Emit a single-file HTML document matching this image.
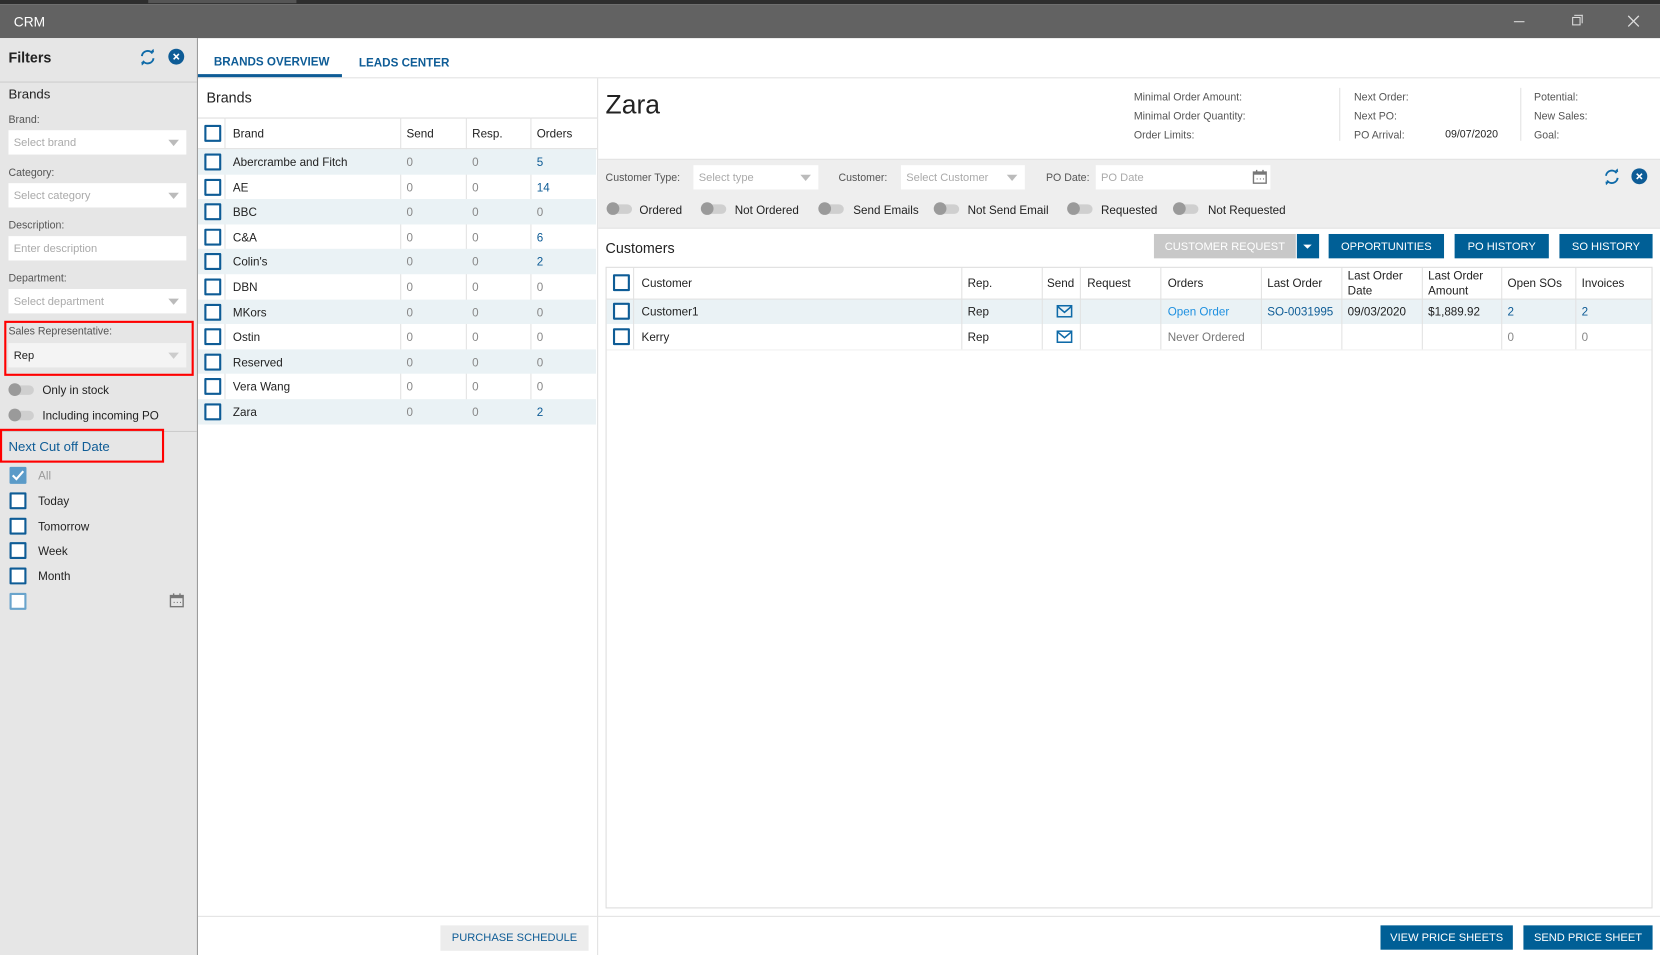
<!DOCTYPE html>
<html><head><meta charset="utf-8">
<style>
*{box-sizing:border-box;margin:0;padding:0}
html,body{width:1660px;height:955px;overflow:hidden;background:#fff}
#w{position:absolute;left:0;top:0;width:1568px;height:902px;transform:scale(1.05867,1.05876);transform-origin:0 0;font-family:"Liberation Sans",sans-serif;font-size:11px;color:#222}
.a{position:absolute}
.t{position:absolute;white-space:nowrap;line-height:14px;margin-top:1px}
.lbl{color:#555;font-size:10px}
.inp{position:absolute;background:#fff;height:23px}
.ph{position:absolute;left:5px;top:6px;color:#aaa;font-size:10.5px;white-space:nowrap}
.arr{position:absolute;right:7px;top:9px;width:0;height:0;border-left:5px solid transparent;border-right:5px solid transparent;border-top:6px solid #bbb}
.cb{position:absolute;width:16px;height:16px;border:2px solid #0e5c96;border-radius:1px;background:#fff}
.tg{position:absolute;width:23px;height:9px;border-radius:5px;background:#cfcfcf}
.tg:before{content:"";position:absolute;left:-1px;top:-2px;width:12px;height:12px;border-radius:50%;background:#9a9a9a}
.btn{position:absolute;background:#005f96;color:#fff;font-size:10.5px;text-align:center;line-height:24px;height:23px}
.blue{color:#0e5c96}
.vl{position:absolute;width:1px;background:#e2e2e2}
.hl{position:absolute;height:1px;background:#e2e2e2}
</style></head><body><div id="w">
<div class="a" style="left:0;top:0;width:1568px;height:4px;background:#2e2e2e"></div>
<div class="a" style="left:140px;top:0;width:140px;height:3px;background:#555"></div>
<div class="a" style="left:0;top:4px;width:1568px;height:32px;background:#626262"></div>
<div class="t" style="left:13px;top:13px;color:#fff;font-size:13px">CRM</div>
<div class="a" style="left:1430px;top:20px;width:10px;height:1px;background:#ddd"></div>
<div class="a" style="left:1485px;top:16px;width:8px;height:8px;border:1px solid #ddd"></div>
<div class="a" style="left:1487px;top:14px;width:8px;height:8px;border-top:1px solid #ddd;border-right:1px solid #ddd"></div>
<svg class="a" style="left:1537px;top:14px" width="12" height="12"><path d="M1 1L11 11M11 1L1 11" stroke="#ddd" stroke-width="1.2"/></svg>

<div class="a" style="left:0;top:36px;width:187px;height:866px;background:#e6e6e6;border-right:1px solid #9a9a9a"></div>
<div class="t" style="left:8px;top:47px;font-size:13.5px;font-weight:bold">Filters</div>
<svg class="a" style="left:131px;top:46px" width="17" height="16" viewBox="0 0 17 16"><path d="M3 7A5.5 5.5 0 0 1 13 4.5M14 9A5.5 5.5 0 0 1 4 11.5" fill="none" stroke="#0e6aa8" stroke-width="1.8"/><path d="M11 3l3.5 0.5L14 0z M6 13l-3.5-0.5L3 16z" fill="#0e6aa8"/></svg>
<div class="a" style="left:159px;top:46px;width:15px;height:15px;border-radius:50%;background:#0e5c96"></div>
<svg class="a" style="left:163px;top:50px" width="7" height="7"><path d="M1 1L6 6M6 1L1 6" stroke="#fff" stroke-width="1.5"/></svg>
<div class="a" style="left:0;top:77px;width:186px;height:1px;background:#ccc"></div>
<div class="t" style="left:8px;top:81px;font-size:12.5px">Brands</div>
<div class="t lbl" style="left:8px;top:106px">Brand:</div>
<div class="inp" style="left:8px;top:123px;width:168px"><span class="ph">Select brand</span><span class="arr"></span></div>
<div class="t lbl" style="left:8px;top:156px">Category:</div>
<div class="inp" style="left:8px;top:173px;width:168px"><span class="ph">Select category</span><span class="arr"></span></div>
<div class="t lbl" style="left:8px;top:206px">Description:</div>
<div class="inp" style="left:8px;top:223px;width:168px"><span class="ph">Enter description</span></div>
<div class="t lbl" style="left:8px;top:256px">Department:</div>
<div class="inp" style="left:8px;top:273px;width:168px"><span class="ph">Select department</span><span class="arr"></span></div>
<div class="a" style="left:4px;top:303px;width:179px;height:52px;border:2px solid #f00"></div>
<div class="t lbl" style="left:8px;top:306px">Sales Representative:</div>
<div class="inp" style="left:8px;top:324px;width:168px;background:#f4f4f4"><span class="ph" style="color:#222">Rep</span><span class="arr" style="border-top-color:#ccc"></span></div>
<div class="tg" style="left:9px;top:364px"></div><div class="t" style="left:40px;top:361px">Only in stock</div>
<div class="tg" style="left:9px;top:388px"></div><div class="t" style="left:40px;top:385px">Including incoming PO</div>
<div class="a" style="left:0;top:407px;width:186px;height:1px;background:#ccc"></div>
<div class="a" style="left:0;top:405px;width:155px;height:32px;border:2px solid #f00"></div>
<div class="t blue" style="left:8px;top:414px;font-size:12.5px">Next Cut off Date</div>
<div class="cb" style="left:9px;top:441px;background:#5b9bc8;border-color:#5b9bc8"></div>
<svg class="a" style="left:11px;top:444px" width="12" height="10"><path d="M1 5l3.5 3.5L11 1" fill="none" stroke="#fff" stroke-width="2"/></svg>
<div class="t" style="left:36px;top:442px;color:#999">All</div>
<div class="cb" style="left:9px;top:465px"></div><div class="t" style="left:36px;top:466px">Today</div>
<div class="cb" style="left:9px;top:489px"></div><div class="t" style="left:36px;top:490px">Tomorrow</div>
<div class="cb" style="left:9px;top:512px"></div><div class="t" style="left:36px;top:513px">Week</div>
<div class="cb" style="left:9px;top:536px"></div><div class="t" style="left:36px;top:537px">Month</div>
<div class="cb" style="left:9px;top:560px;border-color:#6aa4cc"></div>
<svg class="a" style="left:160px;top:560px" width="14" height="14"><rect x="1" y="2.5" width="12" height="10.5" fill="none" stroke="#777" stroke-width="1.3"/><rect x="1" y="2.5" width="12" height="2.5" fill="#777"/><path d="M4 0.5v3M10 0.5v3" stroke="#777" stroke-width="1.3"/><path d="M4 9h1M7 9h1M10 9h1" stroke="#777"/></svg>

<div class="t" style="left:202px;top:51px;font-weight:bold;color:#0e5c96;font-size:11px">BRANDS OVERVIEW</div>
<div class="t" style="left:339px;top:52px;font-weight:bold;color:#0e5c96;font-size:11px">LEADS CENTER</div>
<div class="a" style="left:187px;top:70px;width:136px;height:3px;background:#0e5c96"></div>
<div class="hl" style="left:187px;top:73px;width:1381px"></div>

<div class="vl" style="left:564px;top:74px;height:828px"></div>
<div class="t" style="left:195px;top:85px;font-size:13.5px">Brands</div>
<div class="hl" style="left:187px;top:111px;width:377px;background:#ddd"></div>
<div class="hl" style="left:187px;top:140px;width:377px;background:#ddd"></div>
<div class="vl" style="left:212px;top:111px;height:289px"></div>
<div class="vl" style="left:378px;top:111px;height:289px"></div>
<div class="vl" style="left:440px;top:111px;height:289px"></div>
<div class="vl" style="left:501px;top:111px;height:289px"></div>
<div class="cb" style="left:193px;top:118px"></div>
<div class="t" style="left:220px;top:119px">Brand</div><div class="t" style="left:384px;top:119px">Send</div><div class="t" style="left:446px;top:119px">Resp.</div><div class="t" style="left:507px;top:119px">Orders</div>
<div id="brows"></div>
<div class="hl" style="left:187px;top:865px;width:1381px"></div>
<div class="a" style="left:416px;top:874px;width:140px;height:24px;background:#ececec;color:#0e5c96;font-size:10.5px;text-align:center;line-height:25px">PURCHASE SCHEDULE</div>

<div class="t" style="left:572px;top:84px;font-size:25px;line-height:28px">Zara</div>
<div class="t lbl" style="left:1071px;top:85px">Minimal Order Amount:</div>
<div class="t lbl" style="left:1071px;top:103px">Minimal Order Quantity:</div>
<div class="t lbl" style="left:1071px;top:121px">Order Limits:</div>
<div class="vl" style="left:1265px;top:83px;height:50px"></div>
<div class="t lbl" style="left:1279px;top:85px">Next Order:</div>
<div class="t lbl" style="left:1279px;top:103px">Next PO:</div>
<div class="t lbl" style="left:1279px;top:121px">PO Arrival:</div>
<div class="t" style="left:1365px;top:120px;font-size:10px">09/07/2020</div>
<div class="vl" style="left:1436px;top:83px;height:50px"></div>
<div class="t lbl" style="left:1449px;top:85px">Potential:</div>
<div class="t lbl" style="left:1449px;top:103px">New Sales:</div>
<div class="t lbl" style="left:1449px;top:121px">Goal:</div>

<div class="a" style="left:565px;top:150px;width:1003px;height:66px;background:#eeeeee;border-top:1px solid #e2e2e2;border-bottom:1px solid #e2e2e2"></div>
<div class="t lbl" style="left:572px;top:161px">Customer Type:</div>
<div class="inp" style="left:655px;top:156px;width:118px"><span class="ph">Select type</span><span class="arr"></span></div>
<div class="t lbl" style="left:792px;top:161px">Customer:</div>
<div class="inp" style="left:851px;top:156px;width:117px"><span class="ph">Select Customer</span><span class="arr"></span></div>
<div class="t lbl" style="left:988px;top:161px">PO Date:</div>
<div class="inp" style="left:1035px;top:156px;width:165px"><span class="ph">PO Date</span>
<svg class="a" style="left:148px;top:4px" width="14" height="14"><rect x="1" y="2.5" width="12" height="10.5" fill="none" stroke="#777" stroke-width="1.3"/><rect x="1" y="2.5" width="12" height="2.5" fill="#777"/><path d="M4 0.5v3M10 0.5v3" stroke="#777" stroke-width="1.3"/><path d="M4 9h1M7 9h1M10 9h1" stroke="#777"/></svg></div>
<svg class="a" style="left:1514px;top:159px" width="17" height="16" viewBox="0 0 17 16"><path d="M3 7A5.5 5.5 0 0 1 13 4.5M14 9A5.5 5.5 0 0 1 4 11.5" fill="none" stroke="#0e6aa8" stroke-width="1.8"/><path d="M11 3l3.5 0.5L14 0z M6 13l-3.5-0.5L3 16z" fill="#0e6aa8"/></svg>
<div class="a" style="left:1541px;top:159px;width:15px;height:15px;border-radius:50%;background:#0e5c96"></div>
<svg class="a" style="left:1545px;top:163px" width="7" height="7"><path d="M1 1L6 6M6 1L1 6" stroke="#fff" stroke-width="1.5"/></svg>
<div class="tg" style="left:574px;top:193px"></div><div class="t" style="left:604px;top:191px">Ordered</div>
<div class="tg" style="left:663px;top:193px"></div><div class="t" style="left:694px;top:191px">Not Ordered</div>
<div class="tg" style="left:774px;top:193px"></div><div class="t" style="left:806px;top:191px">Send Emails</div>
<div class="tg" style="left:883px;top:193px"></div><div class="t" style="left:914px;top:191px">Not Send Email</div>
<div class="tg" style="left:1009px;top:193px"></div><div class="t" style="left:1040px;top:191px">Requested</div>
<div class="tg" style="left:1109px;top:193px"></div><div class="t" style="left:1141px;top:191px">Not Requested</div>

<div class="t" style="left:572px;top:227px;font-size:13.5px">Customers</div>
<div class="btn" style="left:1090px;top:221px;width:134px;background:#c8c8c8">CUSTOMER REQUEST</div>
<div class="btn" style="left:1225px;top:221px;width:21px"><span style="position:absolute;left:6px;top:10px;border-left:4px solid transparent;border-right:4px solid transparent;border-top:4px solid #fff"></span></div>
<div class="btn" style="left:1255px;top:221px;width:109px">OPPORTUNITIES</div>
<div class="btn" style="left:1374px;top:221px;width:89px">PO HISTORY</div>
<div class="btn" style="left:1473px;top:221px;width:88px">SO HISTORY</div>

<div class="a" style="left:572px;top:252px;width:989px;height:606px;border:1px solid #ddd"></div>
<div class="a" style="left:573px;top:282px;width:987px;height:24px;background:#eaf2f5"></div>
<div class="hl" style="left:573px;top:282px;width:987px"></div>
<div id="cvl"></div>
<div class="cb" style="left:579px;top:259px"></div>
<div class="t" style="left:606px;top:260px">Customer</div>
<div class="t" style="left:914px;top:260px">Rep.</div>
<div class="t" style="left:989px;top:260px">Send</div>
<div class="t" style="left:1027px;top:260px">Request</div>
<div class="t" style="left:1103px;top:260px">Orders</div>
<div class="t" style="left:1197px;top:260px">Last Order</div>
<div class="t" style="left:1273px;top:253px;line-height:14px">Last Order<br>Date</div>
<div class="t" style="left:1349px;top:253px;line-height:14px">Last Order<br>Amount</div>
<div class="t" style="left:1424px;top:260px">Open SOs</div>
<div class="t" style="left:1494px;top:260px">Invoices</div>

<div class="cb" style="left:579px;top:286px"></div>
<div class="t" style="left:606px;top:287px">Customer1</div>
<div class="t" style="left:914px;top:287px">Rep</div>
<svg class="a" style="left:998px;top:288px" width="15" height="12"><rect x="0.75" y="0.75" width="13.5" height="10.5" fill="none" stroke="#0e6aa8" stroke-width="1.5"/><path d="M1 1.5L7.5 7L14 1.5" fill="none" stroke="#0e6aa8" stroke-width="1.5"/></svg>
<div class="t" style="left:1103px;top:287px;color:#1e90e0">Open Order</div>
<div class="t blue" style="left:1197px;top:287px">SO-0031995</div>
<div class="t" style="left:1273px;top:287px">09/03/2020</div>
<div class="t" style="left:1349px;top:287px">$1,889.92</div>
<div class="t blue" style="left:1424px;top:287px">2</div>
<div class="t blue" style="left:1494px;top:287px">2</div>

<div class="cb" style="left:579px;top:310px"></div>
<div class="t" style="left:606px;top:311px">Kerry</div>
<div class="t" style="left:914px;top:311px">Rep</div>
<svg class="a" style="left:998px;top:312px" width="15" height="12"><rect x="0.75" y="0.75" width="13.5" height="10.5" fill="none" stroke="#0e6aa8" stroke-width="1.5"/><path d="M1 1.5L7.5 7L14 1.5" fill="none" stroke="#0e6aa8" stroke-width="1.5"/></svg>
<div class="t" style="left:1103px;top:311px;color:#777">Never Ordered</div>
<div class="t" style="left:1424px;top:311px;color:#888">0</div>
<div class="t" style="left:1494px;top:311px;color:#888">0</div>

<div class="btn" style="left:1304px;top:874px;width:125px">VIEW PRICE SHEETS</div>
<div class="btn" style="left:1439px;top:874px;width:122px">SEND PRICE SHEET</div>
</div>
<script>
var b=[["Abercrambe and Fitch","5",1],["AE","14",1],["BBC","0",0],["C&A","6",1],["Colin's","2",1],["DBN","0",0],["MKors","0",0],["Ostin","0",0],["Reserved","0",0],["Vera Wang","0",0],["Zara","2",1]];
var h="";
for(var i=0;i<b.length;i++){var y=141+i*23.6;
if(i%2==0)h+='<div class="a" style="left:187px;top:'+y+'px;width:376px;height:23.6px;background:#eaf2f5"></div>';
h+='<div class="cb" style="left:193px;top:'+(y+4)+'px"></div><div class="t" style="left:220px;top:'+(y+5)+'px">'+b[i][0].replace("&","&amp;")+'</div><div class="t" style="left:384px;top:'+(y+5)+'px;color:#888">0</div><div class="t" style="left:446px;top:'+(y+5)+'px;color:#888">0</div><div class="t" style="left:507px;top:'+(y+5)+'px;color:'+(b[i][2]?'#0e5c96':'#888')+'">'+b[i][1]+'</div>';}
document.getElementById("brows").outerHTML=h;
var c=[598,908,984,1020,1096,1191,1267,1343,1418,1488],s="";
for(var j=0;j<c.length;j++)s+='<div class="vl" style="left:'+c[j]+'px;top:253px;height:77px"></div>';
s+='<div class="hl" style="left:573px;top:330px;width:987px;background:#f0f0f0"></div>';
document.getElementById("cvl").outerHTML=s;
</script>
</body></html>
